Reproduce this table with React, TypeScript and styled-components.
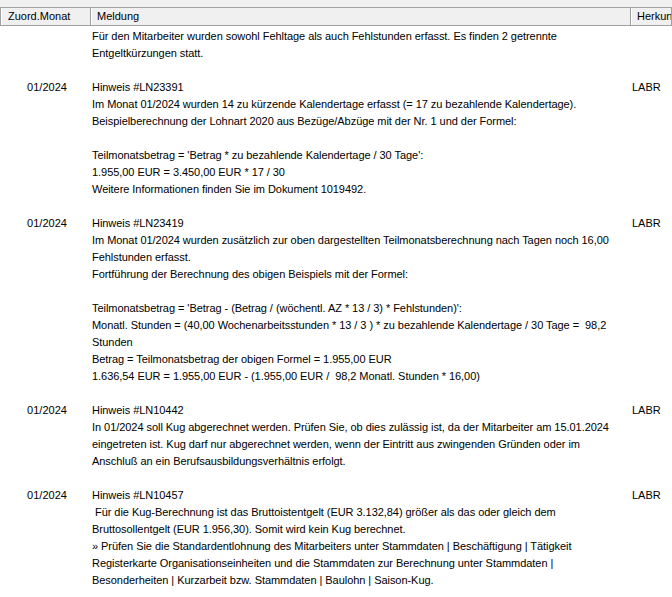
import styled, { createGlobalStyle } from 'styled-components';

const GlobalStyle = createGlobalStyle`
  html, body {
    margin: 0;
    padding: 0;
    background: #ffffff;
  }
  body {
    font-family: Tahoma, "Liberation Sans", Arial, sans-serif;
    font-size: 11px;
    color: #000000;
  }
`;

const COLUMNS = '90px 540px 1fr';

type Message = {
  id: string;
  month?: string;
  source?: string;
  lines: string[];
};

const MESSAGES: Message[] = [
  {
    id: 'prev',
    lines: [
      'Für den Mitarbeiter wurden sowohl Fehltage als auch Fehlstunden erfasst. Es finden 2 getrennte',
      'Entgeltkürzungen statt.',
    ],
  },
  {
    id: 'LN23391',
    month: '01/2024',
    source: 'LABR',
    lines: [
      'Hinweis #LN23391',
      'Im Monat 01/2024 wurden 14 zu kürzende Kalendertage erfasst (= 17 zu bezahlende Kalendertage).',
      'Beispielberechnung der Lohnart 2020 aus Bezüge/Abzüge mit der Nr. 1 und der Formel:',
      '',
      "Teilmonatsbetrag = 'Betrag * zu bezahlende Kalendertage / 30 Tage':",
      '1.955,00 EUR = 3.450,00 EUR * 17 / 30',
      'Weitere Informationen finden Sie im Dokument 1019492.',
    ],
  },
  {
    id: 'LN23419',
    month: '01/2024',
    source: 'LABR',
    lines: [
      'Hinweis #LN23419',
      'Im Monat 01/2024 wurden zusätzlich zur oben dargestellten Teilmonatsberechnung nach Tagen noch 16,00',
      'Fehlstunden erfasst.',
      'Fortführung der Berechnung des obigen Beispiels mit der Formel:',
      '',
      "Teilmonatsbetrag = 'Betrag - (Betrag / (wöchentl. AZ * 13 / 3) * Fehlstunden)':",
      'Monatl. Stunden = (40,00 Wochenarbeitsstunden * 13 / 3 ) * zu bezahlende Kalendertage / 30 Tage =  98,2',
      'Stunden',
      'Betrag = Teilmonatsbetrag der obigen Formel = 1.955,00 EUR',
      '1.636,54 EUR = 1.955,00 EUR - (1.955,00 EUR /  98,2 Monatl. Stunden * 16,00)',
    ],
  },
  {
    id: 'LN10442',
    month: '01/2024',
    source: 'LABR',
    lines: [
      'Hinweis #LN10442',
      'In 01/2024 soll Kug abgerechnet werden. Prüfen Sie, ob dies zulässig ist, da der Mitarbeiter am 15.01.2024',
      'eingetreten ist. Kug darf nur abgerechnet werden, wenn der Eintritt aus zwingenden Gründen oder im',
      'Anschluß an ein Berufsausbildungsverhältnis erfolgt.',
    ],
  },
  {
    id: 'LN10457',
    month: '01/2024',
    source: 'LABR',
    lines: [
      'Hinweis #LN10457',
      ' Für die Kug-Berechnung ist das Bruttoistentgelt (EUR 3.132,84) größer als das oder gleich dem',
      'Bruttosollentgelt (EUR 1.956,30). Somit wird kein Kug berechnet.',
      '» Prüfen Sie die Standardentlohnung des Mitarbeiters unter Stammdaten | Beschäftigung | Tätigkeit',
      'Registerkarte Organisationseinheiten und die Stammdaten zur Berechnung unter Stammdaten |',
      'Besonderheiten | Kurzarbeit bzw. Stammdaten | Baulohn | Saison-Kug.',
    ],
  },
];

const Window = styled.div`
  width: 672px;
  height: 597px;
  overflow: hidden;
  background: #ffffff;
  display: flex;
  flex-direction: column;
`;

const TopStrip = styled.div`
  flex-shrink: 0;
  height: 7px;
  background: #f0f0f0;
  border-bottom: 1px solid #a0a0a0;
`;

const HeaderRow = styled.div`
  flex-shrink: 0;
  display: grid;
  grid-template-columns: ${COLUMNS};
  height: 17px;
  background: #f0f0f0;
  border-bottom: 1px solid #a0a0a0;
  border-left: 1px solid #a0a0a0;
`;

const HeaderCell = styled.div<{ $indent: number }>`
  border-left: 1px solid #ffffff;
  border-right: 1px solid #a0a0a0;
  padding-left: ${({ $indent }) => $indent}px;
  line-height: 17px;
  white-space: nowrap;
  overflow: hidden;
`;

const List = styled.div`
  flex-shrink: 0;
  display: flex;
  flex-direction: column;
  padding-top: 2px;
`;

const Row = styled.div`
  display: grid;
  grid-template-columns: ${COLUMNS};
  padding-bottom: 17px;
`;

const MonthCell = styled.div`
  text-align: center;
  padding-left: 4px;
  line-height: 17px;
`;

const MessageCell = styled.div`
  padding-left: 2px;
  letter-spacing: -0.05px;
`;

const Line = styled.div`
  height: 17px;
  line-height: 17px;
  white-space: pre;
`;

const SourceCell = styled.div`
  padding-left: 2px;
  line-height: 17px;
`;

export default function App() {
  return (
    <>
      <GlobalStyle />
      <Window>
        <TopStrip />
        <HeaderRow>
          <HeaderCell $indent={6}>Zuord.Monat</HeaderCell>
          <HeaderCell $indent={5}>Meldung</HeaderCell>
          <HeaderCell $indent={5}>Herkunft</HeaderCell>
        </HeaderRow>
        <List>
          {MESSAGES.map((msg) => (
            <Row key={msg.id}>
              <MonthCell>{msg.month}</MonthCell>
              <MessageCell>
                {msg.lines.map((line, i) => (
                  <Line key={i}>{line}</Line>
                ))}
              </MessageCell>
              <SourceCell>{msg.source}</SourceCell>
            </Row>
          ))}
        </List>
      </Window>
    </>
  );
}
